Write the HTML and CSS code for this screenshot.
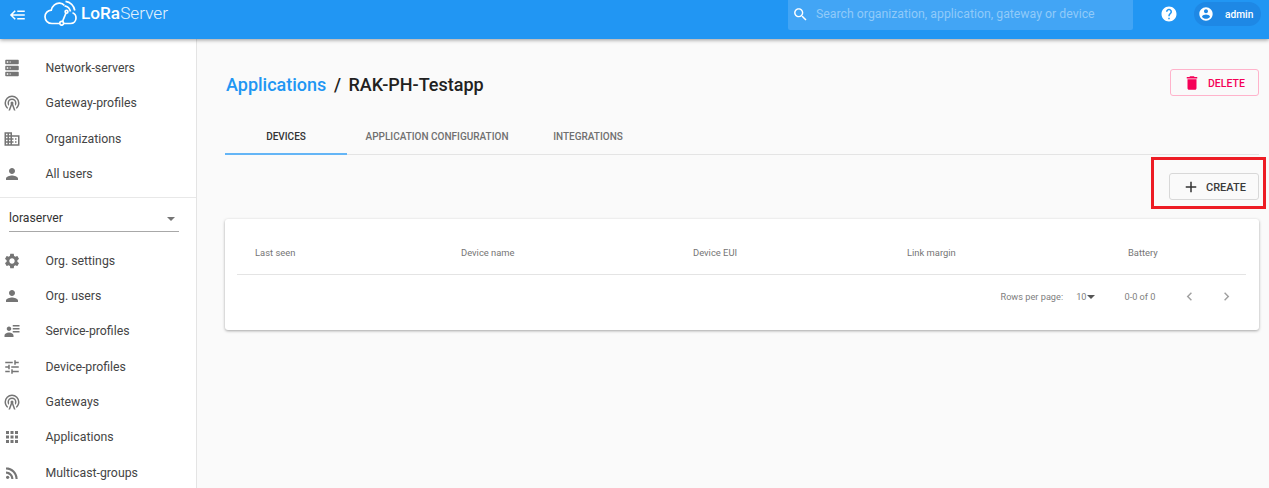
FILE: index.html
```html
<!DOCTYPE html>
<html lang="en">
<head>
    <meta charset="UTF-8">
    <meta name="viewport" content="width=device-width, initial-scale=1.0">
    <title>LoRa Server</title>
    <link rel="stylesheet" href="styles.css">
</head>
<body>
    <header class="topbar">
        <svg class="back-icon" viewBox="0 0 24 24"><path d="M5,13L9,17L7.6,18.42L1.18,12L7.6,5.58L9,7L5,11H21V13H5M21,6V8H11V6H21M21,16V18H11V16H21Z"/></svg>
        <div class="logo">
            <svg class="logo-cloud" viewBox="0 0 33 26">
                <path d="M15.500 23.500H8C4 23.500 1 20.500 1 16.800 1 13.200 3.800 10.300 7.300 10.100 8.300 5.800 11.800 2.800 15.800 3.200 17.600 3.400 19.200 4.200 20.300 5.400"/>
                <path d="M20 23.500H26.500C29.800 23.500 32 21 32 18 32 15.500 30.600 13.500 28.500 12.800"/>
                <path d="M18.500 21.500L22 13"/>
                <path d="M21.500 1.300C26.300 2 30 5.800 30.800 10.500M20.500 5.800C23.500 6.300 25.800 8.500 26.500 11.500"/>
                <circle cx="22.500" cy="11.700" r="1.400"/>
                <circle cx="17.700" cy="23.300" r="1.900"/>
            </svg>
            <span class="logo-text"><b>LoRa</b>Server</span>
        </div>
        <div class="search">
            <svg class="search-icon" viewBox="0 0 24 24"><path d="M15.5 14h-.79l-.28-.27C15.41 12.59 16 11.11 16 9.500 16 5.910 13.090 3 9.500 3S3 5.910 3 9.500 5.910 16 9.500 16c1.610 0 3.090-.59 4.230-1.570l.27.28v.79l5 4.990L20.490 19l-4.990-5zm-6 0C7.010 14 5 11.990 5 9.500S7.010 5 9.500 5 14 7.010 14 9.500 11.990 14 9.500 14z"/></svg>
            <span>Search organization, application, gateway or device</span>
        </div>
        <svg class="help-icon" viewBox="0 0 24 24"><path d="M12 2C6.480 2 2 6.480 2 12s4.480 10 10 10 10-4.480 10-10S17.520 2 12 2zm1 17h-2v-2h2v2zm2.070-7.750l-.9.920C13.450 12.900 13 13.500 13 15h-2v-.5c0-1.100.45-2.100 1.170-2.830l1.240-1.260c.37-.36.59-.86.59-1.410 0-1.100-.9-2-2-2s-2 .9-2 2H8c0-2.210 1.790-4 4-4s4 1.790 4 4c0 .88-.36 1.680-.93 2.250z"/></svg>
        <div class="user-chip">
            <svg class="user-icon" viewBox="0 0 24 24"><path d="M12 2C6.480 2 2 6.480 2 12s4.480 10 10 10 10-4.480 10-10S17.520 2 12 2zm0 3c1.660 0 3 1.340 3 3s-1.340 3-3 3-3-1.340-3-3 1.340-3 3-3zm0 14.200c-2.500 0-4.710-1.280-6-3.220.03-1.990 4-3.080 6-3.080 1.990 0 5.970 1.090 6 3.080-1.290 1.940-3.500 3.220-6 3.220z"/></svg>
            <span>admin</span>
        </div>
    </header>

    <div class="page">
        <nav class="sidebar">
            <ul class="nav-list">
                <li class="nav-item"><svg viewBox="0 0 24 24"><path d="M4,1H20A1,1 0 0,1 21,2V6A1,1 0 0,1 20,7H4A1,1 0 0,1 3,6V2A1,1 0 0,1 4,1M4,9H20A1,1 0 0,1 21,10V14A1,1 0 0,1 20,15H4A1,1 0 0,1 3,14V10A1,1 0 0,1 4,9M4,17H20A1,1 0 0,1 21,18V22A1,1 0 0,1 20,23H4A1,1 0 0,1 3,22V18A1,1 0 0,1 4,17M9,5H10V3H9V5M9,13H10V11H9V13M9,21H10V19H9V21M5,3V5H7V3H5M5,11V13H7V11H5M5,19V21H7V19H5Z"/></svg>Network-servers</li>
                <li class="nav-item"><svg viewBox="0 0 24 24"><path d="M12,10A2,2 0 0,1 14,12C14,12.5 13.82,12.94 13.53,13.29L16.7,22H14.57L12,14.93L9.43,22H7.3L10.47,13.29C10.18,12.94 10,12.5 10,12A2,2 0 0,1 12,10M12,8A4,4 0 0,0 8,12C8,12.5 8.1,13 8.28,13.46L7.4,15.86C6.53,14.81 6,13.47 6,12A6,6 0 0,1 12,6A6,6 0 0,1 18,12C18,13.47 17.47,14.81 16.6,15.86L15.72,13.46C15.9,13 16,12.5 16,12A4,4 0 0,0 12,8M12,4A8,8 0 0,0 4,12C4,14.36 5,16.5 6.64,17.94L5.92,19.94C3.54,18.11 2,15.23 2,12A10,10 0 0,1 12,2A10,10 0 0,1 22,12C22,15.23 20.46,18.11 18.08,19.94L17.36,17.94C19,16.5 20,14.36 20,12A8,8 0 0,0 12,4Z"/></svg>Gateway-profiles</li>
                <li class="nav-item"><svg viewBox="0 0 24 24"><path d="M12 7V3H2v18h20V7H12zM6 19H4v-2h2v2zm0-4H4v-2h2v2zm0-4H4V9h2v2zm0-4H4V5h2v2zm4 12H8v-2h2v2zm0-4H8v-2h2v2zm0-4H8V9h2v2zm0-4H8V5h2v2zm10 12h-8v-2h2v-2h-2v-2h2v-2h-2V9h8v10zm-2-8h-2v2h2v-2zm0 4h-2v2h2v-2z"/></svg>Organizations</li>
                <li class="nav-item"><svg viewBox="0 0 24 24"><path d="M12 12c2.210 0 4-1.790 4-4s-1.790-4-4-4-4 1.790-4 4 1.790 4 4 4zm0 2c-2.670 0-8 1.340-8 4v2h16v-2c0-2.660-5.330-4-8-4z"/></svg>All users</li>
            </ul>
            <div class="org-select">
                <span>loraserver</span>
                <i class="caret"></i>
            </div>
            <ul class="nav-list">
                <li class="nav-item"><svg viewBox="0 0 24 24"><path d="M19.140 12.940c.04-.3.06-.61.06-.94 0-.32-.02-.64-.07-.94l2.030-1.580c.18-.14.23-.41.12-.61l-1.920-3.320c-.12-.22-.37-.29-.59-.22l-2.390.96c-.5-.38-1.030-.7-1.620-.94l-.36-2.540c-.04-.24-.24-.41-.48-.41h-3.840c-.24 0-.43.17-.47.41l-.36 2.540c-.59.24-1.130.57-1.620.94l-2.390-.96c-.22-.08-.47 0-.59.22L2.740 8.870c-.12.21-.08.47.12.61l2.030 1.580c-.05.3-.09.63-.09.94s.02.64.07.94l-2.030 1.580c-.18.14-.23.41-.12.61l1.920 3.320c.12.22.37.29.59.22l2.390-.96c.5.38 1.030.7 1.620.94l.36 2.540c.05.24.24.41.48.41h3.840c.24 0 .44-.17.47-.41l.36-2.540c.59-.24 1.130-.56 1.620-.94l2.390.96c.22.08.47 0 .59-.22l1.920-3.320c.12-.22.07-.47-.12-.61l-2.010-1.580zM12 15.600c-1.980 0-3.600-1.620-3.600-3.600s1.620-3.600 3.600-3.600 3.600 1.620 3.600 3.600-1.620 3.600-3.600 3.600z"/></svg>Org. settings</li>
                <li class="nav-item"><svg viewBox="0 0 24 24"><path d="M12 12c2.210 0 4-1.790 4-4s-1.790-4-4-4-4 1.790-4 4 1.790 4 4 4zm0 2c-2.670 0-8 1.340-8 4v2h16v-2c0-2.660-5.330-4-8-4z"/></svg>Org. users</li>
                <li class="nav-item"><svg viewBox="0 0 24 24"><path d="M11,9C11,10.66 9.660,12 8,12C6.340,12 5,10.66 5,9C5,7.340 6.340,6 8,6C9.660,6 11,7.340 11,9M14,20H2V18C2,15.790 4.690,14 8,14C11.310,14 14,15.790 14,18M22,12V14H13V12M22,8V10H13V8M22,4V6H13V4Z"/></svg>Service-profiles</li>
                <li class="nav-item"><svg viewBox="0 0 24 24"><path d="M3 17v2h6v-2H3zM3 5v2h10V5H3zm10 16v-2h8v-2h-8v-2h-2v6h2zM7 9v2H3v2h4v2h2V9H7zm14 4v-2H11v2h10zm-6-4h2V7h4V5h-4V3h-2v6z"/></svg>Device-profiles</li>
                <li class="nav-item"><svg viewBox="0 0 24 24"><path d="M12,10A2,2 0 0,1 14,12C14,12.5 13.82,12.94 13.53,13.29L16.7,22H14.57L12,14.93L9.43,22H7.3L10.47,13.29C10.18,12.94 10,12.5 10,12A2,2 0 0,1 12,10M12,8A4,4 0 0,0 8,12C8,12.5 8.1,13 8.28,13.46L7.4,15.86C6.53,14.81 6,13.47 6,12A6,6 0 0,1 12,6A6,6 0 0,1 18,12C18,13.47 17.47,14.81 16.6,15.86L15.72,13.46C15.9,13 16,12.5 16,12A4,4 0 0,0 12,8M12,4A8,8 0 0,0 4,12C4,14.36 5,16.5 6.64,17.94L5.92,19.94C3.54,18.11 2,15.23 2,12A10,10 0 0,1 12,2A10,10 0 0,1 22,12C22,15.23 20.46,18.11 18.08,19.94L17.36,17.94C19,16.5 20,14.36 20,12A8,8 0 0,0 12,4Z"/></svg>Gateways</li>
                <li class="nav-item"><svg viewBox="0 0 24 24"><path d="M4 8h4V4H4v4zm6 12h4v-4h-4v4zm-6 0h4v-4H4v4zm0-6h4v-4H4v4zm6 0h4v-4h-4v4zm6-10v4h4V4h-4zm-6 4h4V4h-4v4zm6 6h4v-4h-4v4zm0 6h4v-4h-4v4z"/></svg>Applications</li>
                <li class="nav-item"><svg viewBox="0 0 24 24"><circle cx="6.180" cy="17.820" r="2.180"/><path d="M4 4.440v2.830c7.030 0 12.730 5.700 12.730 12.730h2.830c0-8.590-6.970-15.560-15.560-15.560zm0 5.660v2.830c3.900 0 7.070 3.170 7.070 7.070h2.830c0-5.470-4.430-9.900-9.900-9.900z"/></svg>Multicast-groups</li>
            </ul>
        </nav>

        <main class="content">
            <div class="title-row">
                <h1 class="title"><a class="title-link">Applications</a><span class="title-sep">/</span>RAK-PH-Testapp</h1>
                <button class="btn btn-delete">
                    <svg viewBox="0 0 24 24"><path d="M6 19c0 1.100.9 2 2 2h8c1.100 0 2-.9 2-2V7H6v12zM19 4h-3.500l-1-1h-5l-1 1H5v2h14V4z"/></svg>
                    DELETE
                </button>
            </div>

            <div class="tabs">
                <div class="tab tab-devices active">DEVICES</div>
                <div class="tab tab-config">APPLICATION CONFIGURATION</div>
                <div class="tab tab-integrations">INTEGRATIONS</div>
            </div>

            <div class="actions">
                <button class="btn btn-create">
                    <svg viewBox="0 0 24 24"><path d="M19 13h-6v6h-2v-6H5v-2h6V5h2v6h6v2z"/></svg>
                    CREATE
                </button>
                <div class="highlight"></div>
            </div>

            <section class="card">
                <div class="table-head">
                    <span class="col-seen">Last seen</span>
                    <span class="col-name">Device name</span>
                    <span class="col-eui">Device EUI</span>
                    <span class="col-margin">Link margin</span>
                    <span class="col-battery">Battery</span>
                </div>
                <div class="pager">
                    <span>Rows per page:</span>
                    <span class="pager-size">10<i class="caret caret-dark"></i></span>
                    <span class="pager-count">0-0 of 0</span>
                    <svg class="pager-arrow" viewBox="0 0 24 24"><path d="M15.410 7.410L14 6l-6 6 6 6 1.410-1.410L10.830 12z"/></svg>
                    <svg class="pager-arrow" viewBox="0 0 24 24"><path d="M10 6L8.590 7.410 13.170 12l-4.580 4.590L10 18l6-6z"/></svg>
                </div>
            </section>
        </main>
    </div>
</body>
</html>
```

FILE: styles.css
```css
html, body {
    height: 100%;
    margin: 0;
    overflow: hidden;
}

body {
    font-family: 'Roboto', 'Liberation Sans', sans-serif;
    background-color: #fafafa;
    color: #212121;
}

/* top bar */
.topbar {
    position: relative;
    z-index: 2;
    display: flex;
    align-items: center;
    height: 39px;
    background-color: #2196f3;
    box-shadow: 0 1px 4px rgba(0, 0, 0, 0.4);
    color: #ffffff;
}

.back-icon {
    width: 18px;
    height: 18px;
    margin-left: 9px;
    margin-top: -9px;
    fill: #ffffff;
}

.logo {
    display: flex;
    align-items: center;
    margin-left: 17px;
    margin-top: -13px;
}

.logo-cloud {
    width: 33px;
    height: 26px;
    fill: none;
    stroke: #ffffff;
    stroke-width: 1.700;
}

.logo-text {
    margin-left: 4px;
    font-size: 17.200px;
    font-weight: 300;
    color: #e3f2fd;
}

.logo-text b {
    font-weight: 500;
    color: #ffffff;
}

.search {
    display: flex;
    align-items: center;
    width: 345px;
    height: 30px;
    box-sizing: border-box;
    padding-bottom: 3px;
    margin-left: auto;
    margin-top: -9px;
    background-color: #42a5f5;
    border-radius: 0 0 2px 2px;
    font-size: 12.300px;
    color: #90caf9;
}

.search-icon {
    width: 17px;
    height: 17px;
    margin: 2px 7px 0 4px;
    fill: #ffffff;
}

.help-icon {
    width: 18px;
    height: 18px;
    margin-left: 27px;
    margin-top: -11px;
    fill: #ffffff;
}

.user-chip {
    display: flex;
    align-items: center;
    width: 67px;
    height: 24px;
    margin: -11px 8px 0 16px;
    border-radius: 12px;
    background-color: #1e88e5;
    font-size: 10.200px;
    font-weight: 500;
}

.user-icon {
    width: 16px;
    height: 16px;
    margin: 0 11px 0 4px;
    fill: #ffffff;
}

/* page */
.page {
    display: flex;
    height: 449px;
}

.sidebar {
    flex: none;
    width: 196px;
    padding-top: 11.500px;
    background-color: #ffffff;
    border-right: 1px solid #e4e4e4;
}

.nav-list {
    margin: 0;
    padding: 0;
    list-style: none;
}

.nav-item {
    display: flex;
    align-items: center;
    height: 35.300px;
    padding-left: 3px;
    font-size: 12.300px;
    color: #444444;
}

.nav-item svg {
    flex: none;
    width: 18px;
    height: 18px;
    margin-right: 24.500px;
    fill: #757575;
}

.org-select {
    position: relative;
    display: flex;
    align-items: flex-start;
    height: 34px;
    margin: 5px 0 12.500px;
    box-sizing: border-box;
    border-top: 1px solid #e8e8e8;
    font-size: 12.200px;
    line-height: 15px;
    color: #333333;
}

.org-select span {
    flex: 1;
    margin: 13px 17px 0 9px;
    padding-bottom: 5px;
    border-bottom: 1px solid #a8a8a8;
}

.caret {
    display: inline-block;
    width: 0;
    height: 0;
    border-left: 4px solid transparent;
    border-right: 4px solid transparent;
    border-top: 4px solid #757575;
}

.org-select .caret {
    position: absolute;
    right: 21px;
    top: 19px;
}

/* content */
.content {
    flex: 1;
    min-width: 0;
    padding: 30px 10px 0 28px;
}

.title-row {
    display: flex;
    align-items: center;
    justify-content: space-between;
    height: 27px;
}

.title {
    margin: 3px 0 0 1px;
    font-size: 18px;
    font-weight: 500;
    color: #212121;
}

.title-link {
    color: #2196f3;
}

.title-sep {
    margin: 0 7.500px;
}

.btn {
    display: flex;
    align-items: center;
    height: 27px;
    box-sizing: border-box;
    padding: 1px 0 0;
    background: transparent;
    border-radius: 3px;
    font-family: inherit;
    font-size: 10.500px;
    font-weight: 500;
}

.btn svg {
    width: 18px;
    height: 18px;
}

.btn-delete {
    width: 89px;
    border: 1px solid #ffb3cb;
    color: #f50057;
}

.btn-delete svg {
    margin: 0 7px 0 12px;
    fill: #f50057;
}

.tabs {
    display: flex;
    height: 47px;
    margin-top: 12px;
    box-sizing: border-box;
    border-bottom: 1px solid #e4e4e4;
}

.tab {
    display: flex;
    align-items: center;
    justify-content: center;
    height: 47px;
    box-sizing: border-box;
    padding: 11px 0 2px;
    font-size: 10px;
    font-weight: 500;
    color: #707070;
}

.tab-devices {
    width: 122px;
}

.tab-config {
    width: 180px;
}

.tab-integrations {
    width: 122px;
}

.tab.active {
    padding-bottom: 0;
    color: #333333;
    border-bottom: 2px solid #64b5f6;
}

.actions {
    position: relative;
    display: flex;
    justify-content: flex-end;
    margin-top: 18px;
}

.btn-create {
    width: 90px;
    border: 1px solid #d8d8d8;
    font-size: 11px;
    color: #3a3a3a;
}

.btn-create svg {
    margin: 0 6px 0 12px;
    fill: #333333;
}

/* red box drawn over the screenshot */
.highlight {
    position: absolute;
    left: 926px;
    top: -16px;
    width: 109px;
    height: 46px;
    border: 3px solid #ed1c24;
}

.card {
    margin-top: 19px;
    padding: 12px 13px 0 12px;
    height: 111px;
    box-sizing: border-box;
    background-color: #ffffff;
    border-radius: 3px;
    box-shadow: 0 1px 3px rgba(0, 0, 0, 0.35);
}

.table-head {
    display: grid;
    grid-template-columns: 206px 232px 214px 221px 1fr;
    align-items: center;
    height: 44px;
    padding-left: 18px;
    box-sizing: border-box;
    border-bottom: 1px solid #e4e4e4;
    font-size: 9.400px;
    color: #757575;
}

.pager {
    display: flex;
    align-items: center;
    justify-content: flex-end;
    height: 43px;
    font-size: 9.200px;
    color: #808080;
}

.pager-size {
    display: flex;
    align-items: center;
    gap: 1px;
    margin-left: 13px;
}

.caret-dark {
    border-top-color: #555555;
}

.pager-count {
    margin: 0 25.500px 0 29px;
}

.pager-arrow {
    width: 17px;
    height: 17px;
    fill: #a0a0a0;
}

.pager-arrow + .pager-arrow {
    margin-left: 20px;
    margin-right: 11px;
}
```
